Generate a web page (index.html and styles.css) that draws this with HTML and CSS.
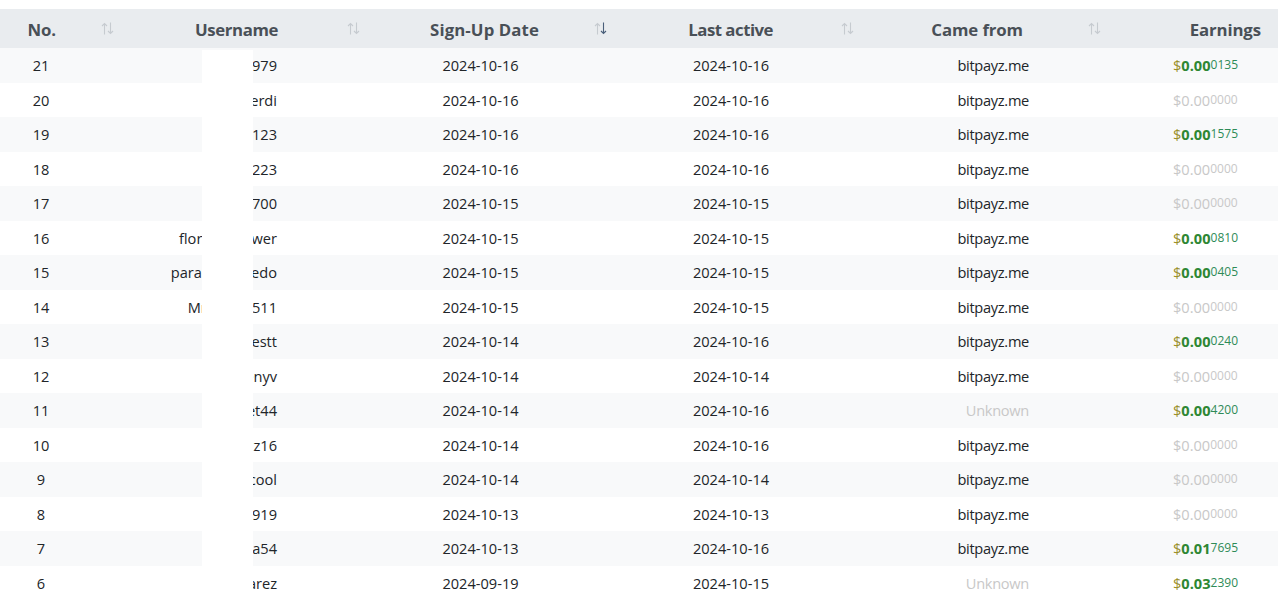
FILE: index.html
```html
<!DOCTYPE html>
<html lang="en">
<head>
<meta charset="utf-8">
<title>Referrals</title>
<link rel="stylesheet" href="styles.css">
</head>
<body>
<div class="table">
  <div class="row head">
    <div class="th th1"><span class="label">No.</span><svg class="sort" viewBox="0 0 13 13"><path class="up" d="M3.5 1.5V12.5M1 4L3.5 1.5L6 4"/><path class="down" d="M9.5 0.5V11.5M7 9L9.5 11.5L12 9"/></svg></div>
    <div class="th th2"><span class="label">Username</span><svg class="sort" viewBox="0 0 13 13"><path class="up" d="M3.5 1.5V12.5M1 4L3.5 1.5L6 4"/><path class="down" d="M9.5 0.5V11.5M7 9L9.5 11.5L12 9"/></svg></div>
    <div class="th th3"><span class="label">Sign-Up Date</span><svg class="sort active" viewBox="0 0 13 13"><path class="up" d="M3.5 1.5V12.5M1 4L3.5 1.5L6 4"/><path class="down" d="M9.5 0.5V11.5M7 9L9.5 11.5L12 9"/></svg></div>
    <div class="th th4"><span class="label">Last active</span><svg class="sort" viewBox="0 0 13 13"><path class="up" d="M3.5 1.5V12.5M1 4L3.5 1.5L6 4"/><path class="down" d="M9.5 0.5V11.5M7 9L9.5 11.5L12 9"/></svg></div>
    <div class="th th5"><span class="label">Came from</span><svg class="sort" viewBox="0 0 13 13"><path class="up" d="M3.5 1.5V12.5M1 4L3.5 1.5L6 4"/><path class="down" d="M9.5 0.5V11.5M7 9L9.5 11.5L12 9"/></svg></div>
    <div class="th th6"><span class="label">Earnings</span></div>
  </div>
  <div class="tbody">
    <div class="row odd"><div class="td c1">21</div><div class="td c2">tyrs979</div><div class="td c3">2024-10-16</div><div class="td c4">2024-10-16</div><div class="td c5">bitpayz.me</div><div class="td c6"><span class="earn"><span class="cur">$</span><b>0.00</b><small>0135</small></span></div></div>
    <div class="row"><div class="td c1">20</div><div class="td c2">lsoerdi</div><div class="td c3">2024-10-16</div><div class="td c4">2024-10-16</div><div class="td c5">bitpayz.me</div><div class="td c6"><span class="earn zero">$0.00<small>0000</small></span></div></div>
    <div class="row odd"><div class="td c1">19</div><div class="td c2">hakn123</div><div class="td c3">2024-10-16</div><div class="td c4">2024-10-16</div><div class="td c5">bitpayz.me</div><div class="td c6"><span class="earn"><span class="cur">$</span><b>0.00</b><small>1575</small></span></div></div>
    <div class="row"><div class="td c1">18</div><div class="td c2">mila223</div><div class="td c3">2024-10-16</div><div class="td c4">2024-10-16</div><div class="td c5">bitpayz.me</div><div class="td c6"><span class="earn zero">$0.00<small>0000</small></span></div></div>
    <div class="row odd"><div class="td c1">17</div><div class="td c2">kent700</div><div class="td c3">2024-10-15</div><div class="td c4">2024-10-15</div><div class="td c5">bitpayz.me</div><div class="td c6"><span class="earn zero">$0.00<small>0000</small></span></div></div>
    <div class="row"><div class="td c1">16</div><div class="td c2">floreeeeeewer</div><div class="td c3">2024-10-15</div><div class="td c4">2024-10-15</div><div class="td c5">bitpayz.me</div><div class="td c6"><span class="earn"><span class="cur">$</span><b>0.00</b><small>0810</small></span></div></div>
    <div class="row odd"><div class="td c1">15</div><div class="td c2">paraeeeeeeedo</div><div class="td c3">2024-10-15</div><div class="td c4">2024-10-15</div><div class="td c5">bitpayz.me</div><div class="td c6"><span class="earn"><span class="cur">$</span><b>0.00</b><small>0405</small></span></div></div>
    <div class="row"><div class="td c1">14</div><div class="td c2">Mmarkus511</div><div class="td c3">2024-10-15</div><div class="td c4">2024-10-15</div><div class="td c5">bitpayz.me</div><div class="td c6"><span class="earn zero">$0.00<small>0000</small></span></div></div>
    <div class="row odd"><div class="td c1">13</div><div class="td c2">momtestt</div><div class="td c3">2024-10-14</div><div class="td c4">2024-10-16</div><div class="td c5">bitpayz.me</div><div class="td c6"><span class="earn"><span class="cur">$</span><b>0.00</b><small>0240</small></span></div></div>
    <div class="row"><div class="td c1">12</div><div class="td c2">kas enyv</div><div class="td c3">2024-10-14</div><div class="td c4">2024-10-14</div><div class="td c5">bitpayz.me</div><div class="td c6"><span class="earn zero">$0.00<small>0000</small></span></div></div>
    <div class="row odd"><div class="td c1">11</div><div class="td c2">rocket44</div><div class="td c3">2024-10-14</div><div class="td c4">2024-10-16</div><div class="td c5 muted">Unknown</div><div class="td c6"><span class="earn"><span class="cur">$</span><b>0.00</b><small>4200</small></span></div></div>
    <div class="row"><div class="td c1">10</div><div class="td c2">bazz16</div><div class="td c3">2024-10-14</div><div class="td c4">2024-10-16</div><div class="td c5">bitpayz.me</div><div class="td c6"><span class="earn zero">$0.00<small>0000</small></span></div></div>
    <div class="row odd"><div class="td c1">9</div><div class="td c2">mrcool</div><div class="td c3">2024-10-14</div><div class="td c4">2024-10-14</div><div class="td c5">bitpayz.me</div><div class="td c6"><span class="earn zero">$0.00<small>0000</small></span></div></div>
    <div class="row"><div class="td c1">8</div><div class="td c2">ann919</div><div class="td c3">2024-10-13</div><div class="td c4">2024-10-13</div><div class="td c5">bitpayz.me</div><div class="td c6"><span class="earn zero">$0.00<small>0000</small></span></div></div>
    <div class="row odd"><div class="td c1">7</div><div class="td c2">tomma54</div><div class="td c3">2024-10-13</div><div class="td c4">2024-10-16</div><div class="td c5">bitpayz.me</div><div class="td c6"><span class="earn"><span class="cur">$</span><b>0.01</b><small>7695</small></span></div></div>
    <div class="row"><div class="td c1">6</div><div class="td c2">alvarez</div><div class="td c3">2024-09-19</div><div class="td c4">2024-10-15</div><div class="td c5 muted">Unknown</div><div class="td c6"><span class="earn"><span class="cur">$</span><b>0.03</b><small>2390</small></span></div></div>
    <div class="mask"></div>
  </div>
</div>
</body>
</html>
```

FILE: styles.css
```css
html, body {
  margin: 0;
  padding: 0;
  background: #fff;
}
body {
  font-family: "Open Sans", "Noto Sans", sans-serif;
  font-size: 14.6px;
  color: #212529;
  overflow: hidden;
}
.table {
  padding-top: 9px;
  width: 1278px;
}
.row {
  display: grid;
  grid-template-columns: 123px 247px 247px 246px 247px 168px;
  height: 34.5px;
  align-items: center;
}
.row.odd {
  background: #f8f9fa;
}
.row.head {
  height: 39px;
  background: #e9ecef;
}
.th {
  display: flex;
  align-items: center;
  justify-content: flex-end;
  height: 100%;
  box-sizing: border-box;
  padding-top: 2px;
  padding-right: 9px;
  font-weight: 700;
  font-size: 16.8px;
  color: #495057;
  letter-spacing: -0.1px;
}
.th .label { white-space: nowrap; }
.th1 .label { margin-right: 45px; }
.th2 { padding-right: 10px; }
.th2 .label { margin-right: 69px; letter-spacing: -0.4px; }
.th3 { padding-right: 10px; }
.th3 .label { margin-right: 55px; letter-spacing: 0.1px; }
.th4 .label { margin-right: 68px; letter-spacing: -0.5px; }
.th5 .label { margin-right: 65px; }
.th6 { padding-right: 17px; }
.sort {
  width: 13px;
  height: 13px;
  flex: none;
  fill: none;
  stroke-width: 1.1;
  margin-top: -2px;
}
.sort .up, .sort .down { stroke: #c6cbd0; }
.sort.active .down { stroke: #4a5f7a; }
.tbody {
  position: relative;
}
.td {
  white-space: nowrap;
  overflow: hidden;
  line-height: 20px;
}
.c1 { text-align: center; padding-right: 41px; }
.c2 { text-align: right; padding-right: 93px; }
.c3 { text-align: center; padding-right: 26px; }
.c4 { text-align: center; padding-right: 18px; }
.c5 { text-align: right; padding-right: 81px; letter-spacing: -0.3px; }
.c5.muted { color: #c8c8c8; }
.c6 { text-align: left; padding-left: 63px; }
.earn b {
  font-weight: 700;
  color: #2e8733;
}
.earn .cur { color: #9a8f2a; }
.earn small {
  font-size: 12px;
  vertical-align: 2px;
  color: #2e8b57;
}
.earn.zero, .earn.zero small {
  color: #c8c8c8;
}
.mask {
  position: absolute;
  left: 202px;
  top: 2px;
  width: 51px;
  bottom: 0;
  background: #fff;
}
```
